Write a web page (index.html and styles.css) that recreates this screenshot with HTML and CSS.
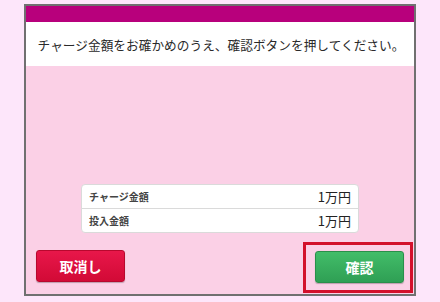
FILE: index.html
```html
<!DOCTYPE html>
<html lang="ja">
<head>
<meta charset="utf-8">
<link rel="stylesheet" href="styles.css">
</head>
<body>
<div class="frame">
  <div class="topbar"></div>
  <div class="message">チャージ金額をお確かめのうえ、確認ボタンを押してください。</div>
  <div class="content">
    <div class="summary">
      <div class="row"><span class="label">チャージ金額</span><span class="amount">1万円</span></div>
      <div class="row"><span class="label">投入金額</span><span class="amount">1万円</span></div>
    </div>
    <div class="actions">
      <button class="btn btn-cancel">取消し</button>
      <div class="focus">
        <button class="btn btn-ok">確認</button>
      </div>
    </div>
  </div>
</div>
</body>
</html>
```
FILE: styles.css
```css
html, body {
  margin: 0;
  padding: 0;
  background: #fde6fa;
  font-family: "Noto Sans CJK JP", "Noto Sans", sans-serif;
}
.frame {
  margin: 4px 24px 0 24px;
  width: 388px;
  height: 288px;
  border: 2px solid #707070;
  display: flex;
  flex-direction: column;
  background: #fbd0e6;
}
.topbar {
  height: 16px;
  background: #b8007c;
}
.message {
  height: 44px;
  background: #fff;
  display: flex;
  align-items: center;
  justify-content: center;
  font-size: 12.7px;
  color: #2a2a2a;
  letter-spacing: 0;
  padding-left: 2px;
}
.content {
  flex: 1;
  display: flex;
  flex-direction: column;
  justify-content: flex-end;
  padding-bottom: 1px;
}
.summary {
  width: 276px;
  margin: 0 auto;
  background: #fff;
  border: 1px solid #dadada;
  border-radius: 4px;
}
.row {
  height: 23px;
  display: flex;
  align-items: center;
  justify-content: space-between;
  padding: 0 7px 0 7px;
}
.row + .row {
  border-top: 1px solid #dadada;
}
.label {
  font-size: 10px;
  font-weight: bold;
  color: #444;
}
.amount {
  font-size: 13px;
  color: #222;
}
.actions {
  margin-top: 9px;
  display: flex;
  justify-content: space-between;
  align-items: flex-start;
}
.btn {
  width: 89px;
  height: 32px;
  border-radius: 3px;
  color: #fff;
  font-family: "Noto Sans CJK JP", sans-serif;
  font-weight: bold;
  font-size: 14px;
  padding: 0;
  display: flex;
  align-items: center;
  justify-content: center;
}
.btn-cancel {
  margin: 8px 0 0 10px;
  background: linear-gradient(#e8174a, #d20a36);
  border: 1px solid #b8082e;
  box-shadow: 0 1px 1px rgba(0,0,0,0.25);
}
.focus {
  margin-right: 1px;
  border: 3px solid #d3102b;
  padding: 6px 6px 7px 9px;
}
.btn-ok {
  background: linear-gradient(#42bd69, #2f9f54);
  border: 1px solid #2a8f4a;
  box-shadow: 0 1px 1px rgba(0,0,0,0.25);
}
```
